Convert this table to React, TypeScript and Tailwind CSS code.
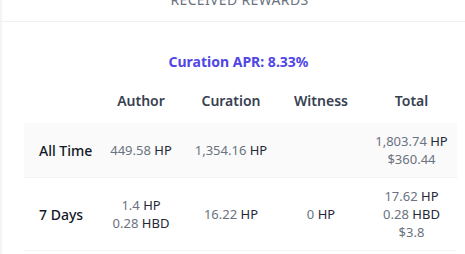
import { FC, ReactNode } from 'react';

interface Amount {
  value: string;
  unit?: string;
}

interface Row {
  label: string;
  author: Amount[];
  curation: Amount[];
  witness: Amount[];
  total: Amount[];
  shaded?: boolean;
}

const rows: Row[] = [
  {
    label: 'All Time',
    author: [{ value: '449.58', unit: 'HP' }],
    curation: [{ value: '1,354.16', unit: 'HP' }],
    witness: [],
    total: [{ value: '1,803.74', unit: 'HP' }, { value: '$360.44' }],
    shaded: true,
  },
  {
    label: '7 Days',
    author: [{ value: '1.4', unit: 'HP' }, { value: '0.28', unit: 'HBD' }],
    curation: [{ value: '16.22', unit: 'HP' }],
    witness: [{ value: '0', unit: 'HP' }],
    total: [{ value: '17.62', unit: 'HP' }, { value: '0.28', unit: 'HBD' }, { value: '$3.8' }],
  },
];

const Cell: FC<{ items: Amount[] }> = ({ items }) => (
  <div className="flex flex-col items-center justify-center text-[13px] leading-[18px]">
    {items.map((a, i) => (
      <div key={i} className="whitespace-nowrap">
        <span className="text-[#6b7280]">{a.value}</span>
        {a.unit && <span className="text-[#1f2937]"> {a.unit}</span>}
      </div>
    ))}
  </div>
);

const Head: FC<{ children: ReactNode }> = ({ children }) => (
  <div className="text-center text-[14px] leading-5 font-semibold text-[#374151]">{children}</div>
);

const App: FC = () => {
  return (
    <div className="w-[465px] h-[254px] overflow-hidden bg-white border-l-2 border-[#f3f4f6] font-['Noto_Sans',sans-serif]">
      <div className="-mt-[26px] border-b border-[#f0f0f0] pt-4 pb-[11px] text-center">
        <div className="ml-[12px] text-[14px] leading-5 uppercase tracking-wide text-[#6b7280]">
          Received Rewards
        </div>
      </div>

      <div className="pt-[30px]">
        <div className="ml-[10px] text-center text-[14px] leading-5 font-bold text-[#4f46e5]">
          Curation APR: 8.33%
        </div>

        <div className="ml-[22px] mt-[7px] w-[433px]">
          <div className="grid grid-cols-[72px_90px_90px_90px_91px] py-3">
            <div />
            <Head>Author</Head>
            <Head>Curation</Head>
            <Head>Witness</Head>
            <Head>Total</Head>
          </div>
          {rows.map((r) => (
            <div
              key={r.label}
              className={`grid grid-cols-[72px_90px_90px_90px_91px] border-b border-[#f3f4f6] py-[9px] ${
                r.shaded ? 'bg-[#fafafa]' : 'bg-white'
              }`}
            >
              <div className="flex items-center pl-[15px] text-[14px] font-medium text-[#111827] whitespace-nowrap">
                {r.label}
              </div>
              <Cell items={r.author} />
              <Cell items={r.curation} />
              <Cell items={r.witness} />
              <Cell items={r.total} />
            </div>
          ))}
        </div>
      </div>
    </div>
  );
};

export default App;
